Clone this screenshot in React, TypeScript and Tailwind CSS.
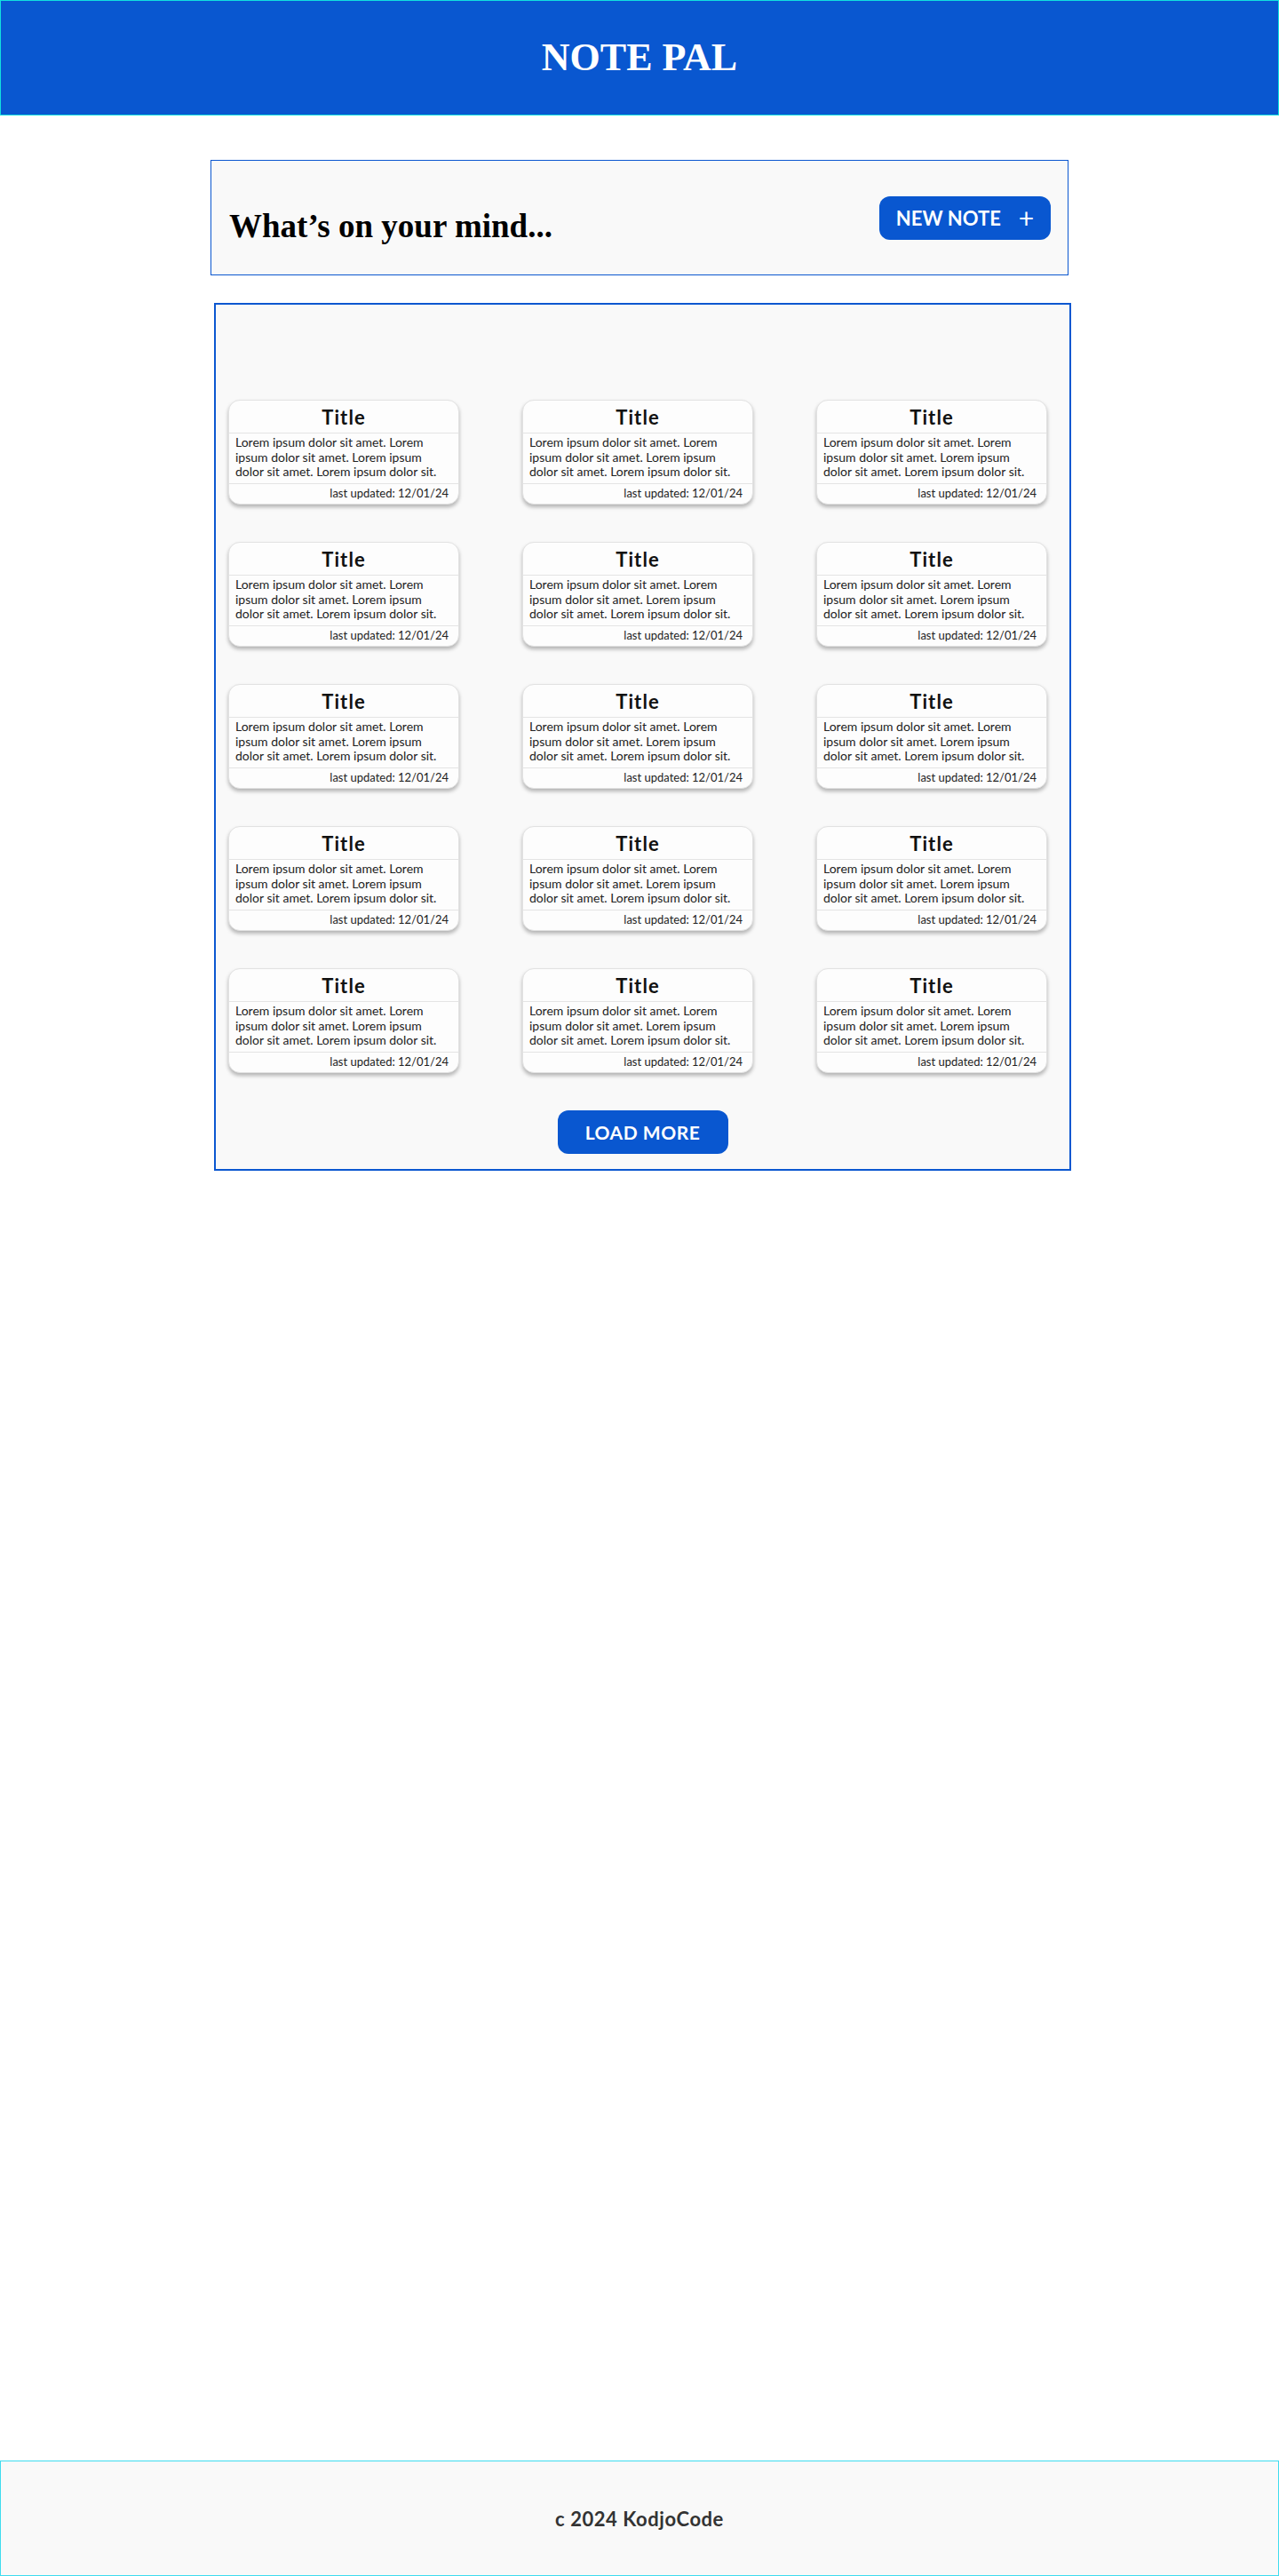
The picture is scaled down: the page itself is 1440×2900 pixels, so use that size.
import React from 'react';

// Static note data for the grid
interface Note {
  id: number;
  title: string;
  body: string;
  updated: string;
}

const notes: Note[] = Array.from({ length: 15 }, (_, i) => ({
  id: i,
  title: 'Title',
  body: 'Lorem ipsum dolor sit amet. Lorem ipsum dolor sit amet. Lorem ipsum dolor sit amet. Lorem ipsum dolor sit.',
  updated: '12/01/24',
}));

function NoteCard({ note }: { note: Note }) {
  return (
    <div className="w-[260px] h-[118px] rounded-[13px] border border-[#e2e2e2] bg-[#fdfdfd] shadow-[0_3px_4px_rgba(0,0,0,0.28)] overflow-hidden flex flex-col">
      <div className="h-[37px] flex items-center justify-center border-b border-[#e4e4e4]">
        <h3 className="text-[22px] font-bold tracking-wider text-[#111]">{note.title}</h3>
      </div>
      <p className="h-[57px] px-[7px] pt-[2px] text-[14px] leading-[16.5px] text-[#222] border-b border-[#e4e4e4]">
        {note.body}
      </p>
      <div className="flex-1 flex items-center justify-end pr-[11px] text-[13px] text-[#222]">
        last updated: {note.updated}
      </div>
    </div>
  );
}

export default function App() {
  return (
    <div className="min-h-screen flex flex-col bg-white font-['Lato',sans-serif]">
      {/* Header */}
      <header className="h-[130px] flex items-center justify-center bg-[#0957d0] border border-[#12e0e0]">
        <h1 className="font-['Liberation_Serif',serif] font-bold text-[44px] text-white">NOTE PAL</h1>
      </header>

      <main className="flex-1">
        {/* Prompt box */}
        <div className="ml-[237px] mt-[50px] w-[966px] h-[130px] flex items-center justify-between bg-[#f9f9f9] border border-[#0b57d0] pl-[20px] pr-[19px]">
          <h2 className="mt-[20px] font-['Liberation_Serif',serif] font-bold text-[37px] text-black">
            What’s on your mind...
          </h2>
          <button className="w-[193px] h-[49px] rounded-[12px] bg-[#0957d0] text-white flex items-center justify-center gap-[20px] text-[22px] font-bold">
            <span>NEW NOTE</span>
            <span className="text-[30px] font-normal leading-none">+</span>
          </button>
        </div>

        {/* Notes list */}
        <section className="ml-[241px] mt-[31px] w-[965px] bg-[#f9f9f9] border-2 border-[#0b57d0] pt-[107px] pb-[17px]">
          <div className="grid grid-cols-[260px_260px_260px] gap-x-[71px] gap-y-[42px] pl-[14px]">
            {notes.map((note) => (
              <NoteCard key={note.id} note={note} />
            ))}
          </div>
          <div className="flex justify-center mt-[42px]">
            <button className="w-[192px] h-[49px] rounded-[12px] bg-[#0957d0] text-white text-[21px] font-bold tracking-wide">
              LOAD MORE
            </button>
          </div>
        </section>
      </main>

      {/* Footer */}
      <footer className="h-[130px] flex items-center justify-center bg-[#f9f9f9] border border-[#3fdcef]">
        <p className="text-[22px] font-bold tracking-wide text-[#333]">c 2024 KodjoCode</p>
      </footer>
    </div>
  );
}
